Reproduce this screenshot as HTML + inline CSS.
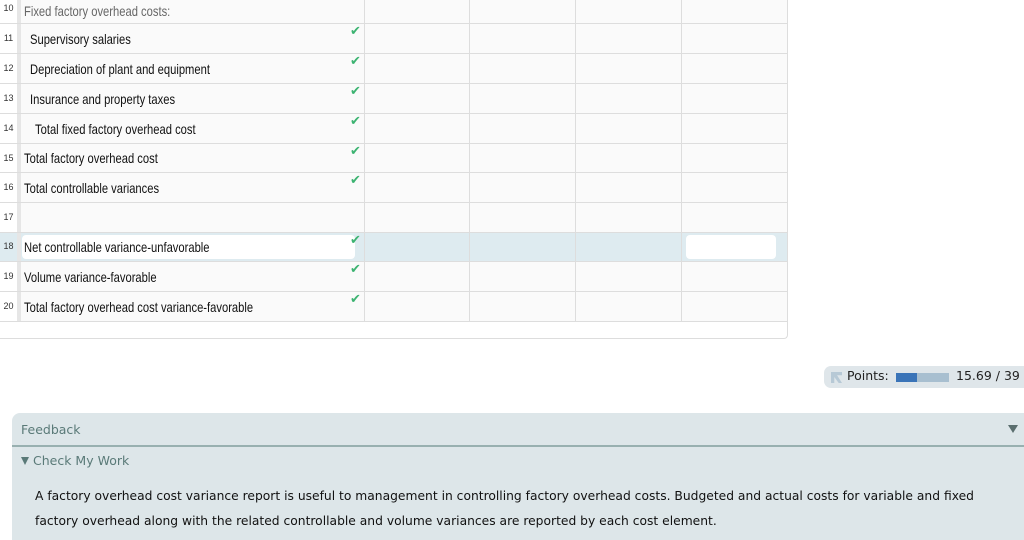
<!DOCTYPE html>
<html><head><style>
*{margin:0;padding:0;box-sizing:border-box}
body{width:1024px;height:540px;overflow:hidden;background:#fff;position:relative;font-family:"Liberation Sans Narrow","Liberation Sans",sans-serif;}
.tbl{position:absolute;left:0;top:0;width:788px;height:339px;border-right:1px solid #ddd;border-bottom:1px solid #ddd;border-bottom-right-radius:4px;}
.row{position:absolute;left:0;width:787px;background:#fafafa;border-bottom:1px solid #ddd;}
.num{position:absolute;left:0;width:17px;top:0;bottom:0;font-size:9px;color:#333;text-align:center;background:#fff}
.bar{position:absolute;left:17px;width:4px;top:0;bottom:0;background:#e6e6e6}
.lab{position:absolute;left:24px;top:0;bottom:0;font-size:14px;color:#111;display:flex;align-items:center;white-space:nowrap;transform:scaleX(.8);transform-origin:left}
.v{position:absolute;top:0;bottom:0;width:1px;background:#ddd}
.ck{position:absolute;left:350px;top:0px;color:#3cb371;font-size:13px;font-weight:bold;font-family:"DejaVu Sans",sans-serif}
</style></head><body>
<div class="tbl">
<div class="row" style="top:-6px;height:30px"><div class="num" style="padding-top:9px">10</div><div class="bar"></div><div class="lab" style="top:4px;color:#666">Fixed factory overhead costs:</div></div>
<div class="row" style="top:24px;height:30px"><div class="num" style="padding-top:9px">11</div><div class="bar"></div><div class="lab" style="left:30px">Supervisory salaries</div><div class="ck">✔</div></div>
<div class="row" style="top:54px;height:30px"><div class="num" style="padding-top:9px">12</div><div class="bar"></div><div class="lab" style="left:30px">Depreciation of plant and equipment</div><div class="ck">✔</div></div>
<div class="row" style="top:84px;height:30px"><div class="num" style="padding-top:9px">13</div><div class="bar"></div><div class="lab" style="left:30px">Insurance and property taxes</div><div class="ck">✔</div></div>
<div class="row" style="top:114px;height:30px"><div class="num" style="padding-top:9px">14</div><div class="bar"></div><div class="lab" style="left:35px">Total fixed factory overhead cost</div><div class="ck">✔</div></div>
<div class="row" style="top:144px;height:29px"><div class="num" style="padding-top:9px">15</div><div class="bar"></div><div class="lab">Total factory overhead cost</div><div class="ck">✔</div></div>
<div class="row" style="top:173px;height:30px"><div class="num" style="padding-top:9px">16</div><div class="bar"></div><div class="lab">Total controllable variances</div><div class="ck">✔</div></div>
<div class="row" style="top:203px;height:30px"><div class="num" style="padding-top:9px">17</div><div class="bar"></div></div>
<div class="row" style="top:233px;height:29px;background:#deebf0"><div class="num" style="padding-top:8px;background:#deebf0">18</div><div class="bar"></div><div style="position:absolute;left:22px;top:2px;width:333px;height:24px;background:#fff;border-radius:4px"></div><div style="position:absolute;left:686px;top:2px;width:90px;height:24px;background:#fff;border-radius:4px"></div><div class="lab">Net controllable variance-unfavorable</div><div class="ck">✔</div></div>
<div class="row" style="top:262px;height:30px"><div class="num" style="padding-top:9px">19</div><div class="bar"></div><div class="lab">Volume variance-favorable</div><div class="ck">✔</div></div>
<div class="row" style="top:292px;height:30px"><div class="num" style="padding-top:9px">20</div><div class="bar"></div><div class="lab">Total factory overhead cost variance-favorable</div><div class="ck">✔</div></div>
<div class="v" style="left:364px;top:0;height:321px"></div>
<div class="v" style="left:469px;top:0;height:321px"></div>
<div class="v" style="left:575px;top:0;height:321px"></div>
<div class="v" style="left:681px;top:0;height:321px"></div>
</div>
<div style="position:absolute;left:824px;top:366px;width:200px;height:22px;background:#dfe6ea;border-radius:7px 0 0 7px;font-family:'DejaVu Sans',sans-serif;font-size:12.5px;color:#222">
<div style="position:absolute;left:7px;top:6px;width:11px;height:11px;background:#b7c9d6;clip-path:polygon(0 0,100% 0,100% 30%,55% 30%,100% 100%,70% 100%,30% 45%,30% 100%,0 100%)"></div>
<span style="position:absolute;left:23px;top:2px">Points:</span>
<div style="position:absolute;left:72px;top:7px;width:53px;height:9px;background:#a8bfd0"><div style="width:21px;height:9px;background:#3a74b8"></div></div>
<span style="position:absolute;left:132px;top:2px">15.69 / 39</span>
</div>
<div style="position:absolute;left:12px;top:413px;width:1012px;height:127px;background:#dde6e9;border-top-left-radius:8px;font-family:'DejaVu Sans',sans-serif;">
<div style="position:absolute;left:9px;top:9px;font-size:12.5px;color:#5a7a78">Feedback</div>
<div style="position:absolute;right:6px;top:12px;width:0;height:0;border-left:5px solid transparent;border-right:5px solid transparent;border-top:8px solid #5a6e6e"></div>
<div style="position:absolute;left:0;right:0;top:32px;height:2px;background:#98b0b0"></div>
<div style="position:absolute;left:9px;top:40px;font-size:12.5px;color:#5a7a78"><span style="display:inline-block;width:0;height:0;border-left:4px solid transparent;border-right:4px solid transparent;border-top:8px solid #5a7a78;margin-right:4px"></span>Check My Work</div>
<div style="position:absolute;left:23px;top:71px;font-size:12.3px;color:#111;line-height:25px;width:975px">A factory overhead cost variance report is useful to management in controlling factory overhead costs. Budgeted and actual costs for variable and fixed factory overhead along with the related controllable and volume variances are reported by each cost element.</div>
</div>
</body></html>
